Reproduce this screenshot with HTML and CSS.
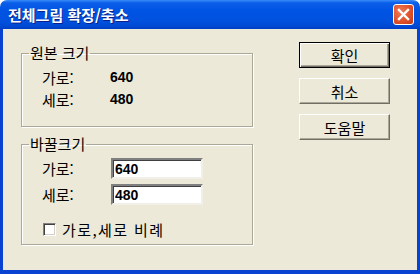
FILE: index.html
```html
<!DOCTYPE html>
<html lang="ko">
<head>
    <meta charset="UTF-8">
    <title>전체그림 확장/축소</title>
    <link rel="stylesheet" href="styles.css">
</head>
<body>
    <div class="window">
        <div class="titlebar">
            <span class="title">전체그림 확장/축소</span>
            <button class="close-btn" aria-label="닫기">
                <svg width="13" height="13" viewBox="0 0 13 13">
                    <path d="M2 2 L11 11 M11 2 L2 11" stroke="#fff" stroke-width="2.4" stroke-linecap="square"/>
                </svg>
            </button>
        </div>

        <div class="client">
            <div class="groups">
                <fieldset class="group group-orig">
                    <legend>원본 크기</legend>
                    <div class="row">
                        <span class="label">가로:</span>
                        <span class="value">640</span>
                    </div>
                    <div class="row">
                        <span class="label">세로:</span>
                        <span class="value">480</span>
                    </div>
                </fieldset>

                <fieldset class="group group-new">
                    <legend>바꿀크기</legend>
                    <div class="row input-row">
                        <span class="label">가로:</span>
                        <input class="field" type="text" value="640">
                    </div>
                    <div class="row input-row">
                        <span class="label">세로:</span>
                        <input class="field" type="text" value="480">
                    </div>
                    <label class="check-row">
                        <span class="checkbox"></span>
                        <span class="check-text">가로,세로 비례</span>
                    </label>
                </fieldset>
            </div>

            <div class="buttons">
                <button class="btn btn-default">확인</button>
                <button class="btn">취소</button>
                <button class="btn">도움말</button>
            </div>
        </div>
    </div>
</body>
</html>
```

FILE: styles.css
```css
* {
    box-sizing: border-box;
    margin: 0;
    padding: 0;
}

body {
    background: #fff;
    font-family: "Noto Sans CJK KR", "DejaVu Sans", sans-serif;
    font-size: 15px;
    color: #000;
}

.window {
    width: 420px;
    height: 274px;
    display: flex;
    flex-direction: column;
}

.titlebar {
    height: 29px;
    display: flex;
    align-items: center;
    justify-content: space-between;
    padding: 0 6px 0 8px;
    border-radius: 7px 7px 0 0;
    background: linear-gradient(to bottom, #3a8cf8 0%, #0a5ee8 10%, #0054e3 35%, #0051de 70%, #0049d4 90%, #003ec6 100%);
}

.title {
    color: #fff;
    font-weight: bold;
    font-size: 15px;
    line-height: 16px;
    text-shadow: 1px 1px 0 #0a1f8a;
}

.close-btn {
    width: 21px;
    height: 21px;
    border: 1px solid #fff;
    border-radius: 3px;
    background: radial-gradient(circle at 35% 35%, #ee7b55 0%, #e0522a 55%, #c23a16 100%);
    display: flex;
    align-items: center;
    justify-content: center;
}

.client {
    flex: 1;
    display: flex;
    gap: 46px;
    background: #ece9d8;
    border: 3px solid #0842d0;
    border-top: none;
    border-bottom-width: 4px;
    padding: 13px 0 0 18px;
}

.groups {
    display: flex;
    flex-direction: column;
    gap: 9px;
    padding-top: 3px;
}

.group {
    width: 232px;
    border: 1px solid #aca899;
    box-shadow: 1px 1px 0 #fff, inset 1px 1px 0 #fff;
    padding: 0 0 0 20px;
}

.group legend {
    margin-left: -13px;
    padding: 0 1px;
    line-height: 16px;
}

.group-orig {
    padding-top: 5px;
    padding-bottom: 16px;
}

.group-new {
    padding-top: 6px;
    padding-bottom: 6px;
}

.row {
    display: flex;
    align-items: center;
    height: 22px;
}

.label {
    width: 68px;
}

.value {
    font-family: "Liberation Sans", sans-serif;
    font-weight: bold;
    font-size: 14px;
}

.input-row {
    height: 21px;
    margin-bottom: 5px;
}

.field {
    width: 92px;
    height: 21px;
    margin-left: 1px;
    background: #fff;
    border: 2px solid;
    border-color: #808080 #f0efe8 #f0efe8 #808080;
    box-shadow: inset 1px 1px 0 #404040;
    font-family: "Liberation Sans", sans-serif;
    font-weight: bold;
    font-size: 14px;
    padding: 0 2px;
    outline: none;
}

.check-row {
    display: flex;
    align-items: center;
    gap: 6px;
    height: 18px;
    margin-top: 15px;
    margin-left: 1px;
}

.check-text {
    letter-spacing: 1.4px;
}

.checkbox {
    width: 13px;
    height: 13px;
    background: #fff;
    border: 1px solid;
    border-color: #808080 #fff #fff #808080;
    box-shadow: inset 1px 1px 0 #404040, inset -1px -1px 0 #d4d0c8;
}

.buttons {
    display: flex;
    flex-direction: column;
    gap: 10px;
}

.btn {
    width: 91px;
    height: 26px;
    font-family: inherit;
    font-size: 15px;
    background: #ece9d8;
    border: 1px solid;
    border-color: #fff #716f64 #716f64 #fff;
    box-shadow: inset -1px -1px 0 #aca899;
}

.btn-default {
    border: 1px solid #000;
    box-shadow: inset 1px 1px 0 #fff, inset -1px -1px 0 #716f64, inset -2px -2px 0 #aca899;
}
```
